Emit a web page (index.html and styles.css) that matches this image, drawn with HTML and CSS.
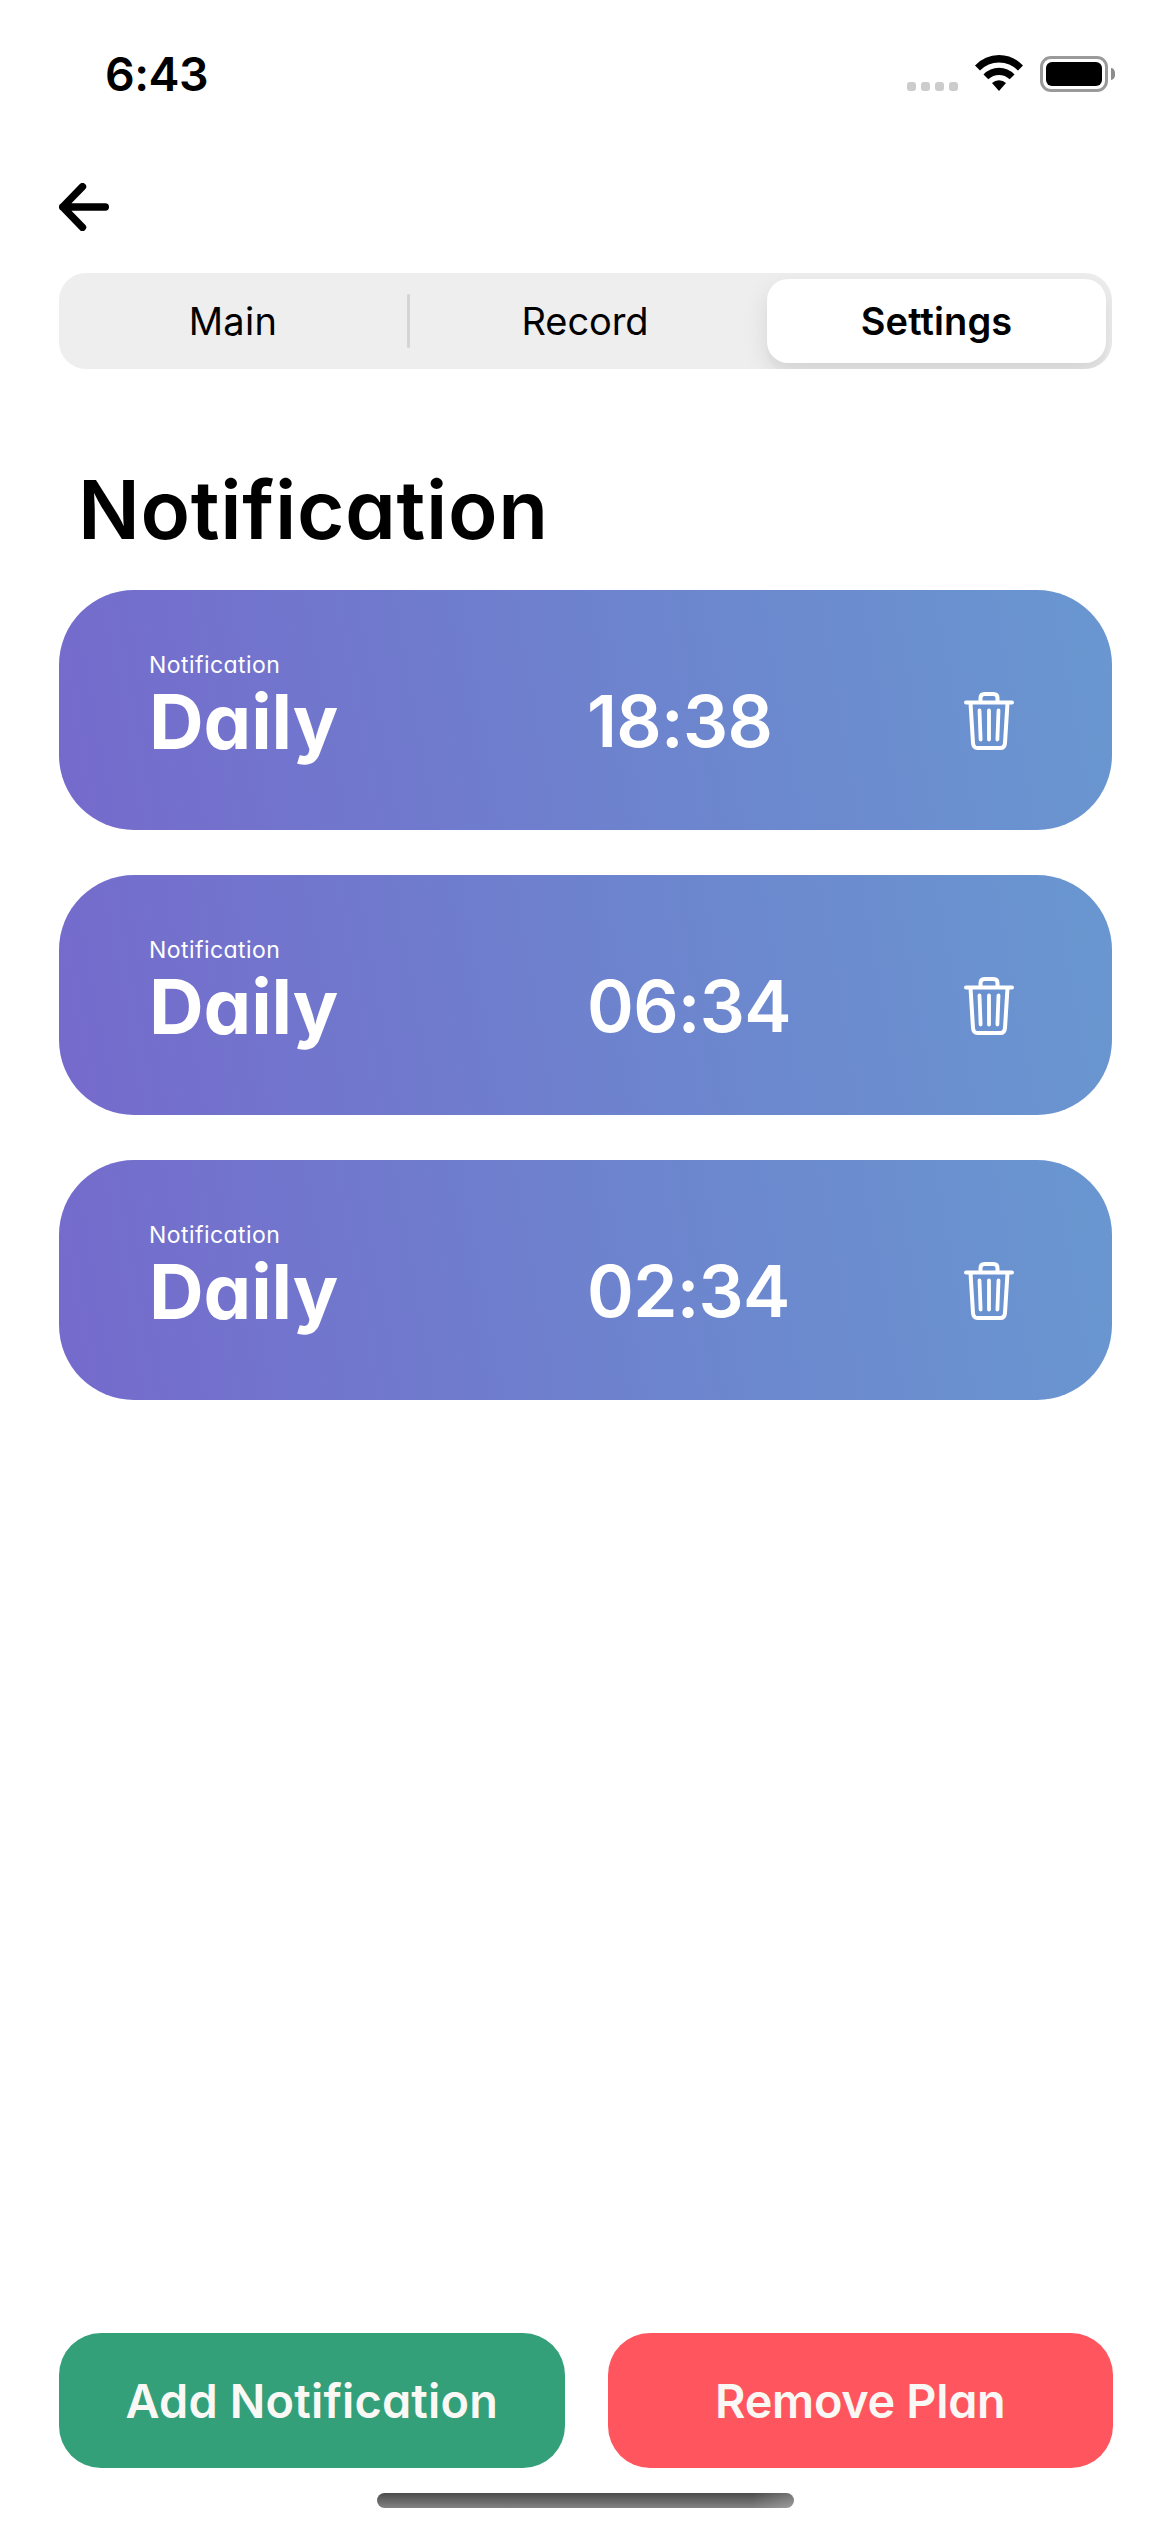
FILE: index.html
```html
<!DOCTYPE html>
<html lang="en">
<head>
<meta charset="utf-8">
<title>Notification settings</title>
<link rel="stylesheet" href="styles.css">
</head>
<body>
<svg class="defs" width="0" height="0" aria-hidden="true">
  <symbol id="trash" viewBox="0 0 50 58">
    <g fill="none" stroke="#fff" stroke-linecap="round" stroke-linejoin="round">
      <path stroke-width="4" d="M2 10.5H48"/>
      <path stroke-width="4" d="M16.5 10V6Q16.5 2 20.500 2H29.500Q33.500 2 33.500 6V10"/>
      <path stroke-width="4" d="M6.500 11L9 51Q9.400 56 13.500 56H36.500Q40.600 56 41 51L43.500 11"/>
      <path stroke-width="3.800" d="M15.500 18.500L16.600 47.500M25 18.500V47.500M34.500 18.500L33.400 47.500"/>
    </g>
  </symbol>
</svg>
<div class="screen">
  <header class="status">
    <span class="clock">6:43</span>
    <div class="indicators">
      <div class="cell"><i></i><i></i><i></i><i></i></div>
      <svg class="wifi" width="50" height="38" viewBox="0 0 50 38">
        <path d="M1 11.500Q11 1 25 1T49 11.500L44 16.500Q36 8.500 25 8.500T6 16.500Z"/>
        <path d="M9.500 20.500Q16 13.800 25 13.800T40.500 20.500L35.700 25.300Q31 21 25 21T14.300 25.300Z"/>
        <path d="M18 29Q21 26.300 25 26.300T32 29L25 37Z"/>
      </svg>
      <div class="battery"><div class="shell"><div class="charge"></div></div><div class="nub"></div></div>
    </div>
  </header>
  <nav class="back">
    <svg width="50" height="48" viewBox="0 0 50 48"><path d="M3.700 24H46.300M23.500 3.700L3.700 24L23.500 44.300" fill="none" stroke="#000" stroke-width="7.400" stroke-linecap="round" stroke-linejoin="round"/></svg>
  </nav>
  <div class="segments">
    <div class="segment main">Main</div>
    <div class="divider"></div>
    <div class="segment record">Record</div>
    <div class="segment selected">Settings</div>
  </div>
  <h1 class="title">Notification</h1>
  <main class="cards">
    <section class="card"><div class="info"><div class="kind">Notification</div><div class="repeat">Daily</div></div><div class="time">18:38</div><svg class="trash"><use href="#trash"/></svg></section>
    <section class="card"><div class="info"><div class="kind">Notification</div><div class="repeat">Daily</div></div><div class="time">06:34</div><svg class="trash"><use href="#trash"/></svg></section>
    <section class="card"><div class="info"><div class="kind">Notification</div><div class="repeat">Daily</div></div><div class="time">02:34</div><svg class="trash"><use href="#trash"/></svg></section>
  </main>
  <footer class="actions">
    <button class="button add">Add Notification</button>
    <button class="button remove">Remove Plan</button>
  </footer>
  <div class="home"></div>
</div>
</body>
</html>
```
FILE: styles.css
```css
* { box-sizing: border-box; }
body { margin: 0; background: #fff; font-family: Inter, "Liberation Sans", sans-serif; color: #000; }
.defs { display: none; }
.screen { display: flex; flex-direction: column; width: 1170px; height: 2532px; padding: 0 57px 24px 59px; }
.status { display: flex; justify-content: space-between; height: 147px; padding: 54px 0 0 46px; margin-right: -2px; }
.clock { font-size: 46.500px; line-height: 41px; font-weight: 600; letter-spacing: -0.500px; }
.indicators { display: flex; }
.cell { display: flex; gap: 5px; padding-top: 28px; margin-right: 16px; }
.cell i { width: 9px; height: 9px; border-radius: 3px; background: #ccc; }
.wifi { margin-right: 16px; }
.battery { display: flex; gap: 3px; padding-top: 2px; }
.shell { width: 68px; height: 36px; padding: 3px; border: 3px solid #9a9a9a; border-radius: 11px; }
.charge { height: 24px; border-radius: 6px; background: #000; }
.nub { width: 4px; height: 12px; margin-top: 12px; border-radius: 0 5px 5px 0 / 0 6px 6px 0; background: #8c8c8c; }
.back { height: 126px; padding-top: 36px; }
.segments { display: flex; width: 1053px; height: 96px; padding: 6px; border-radius: 27px; background: #eee; overflow: hidden; font-size: 38px; line-height: 84px; text-align: center; }
.segment { flex: none; width: 341px; }
.main { padding-right: 5px; letter-spacing: 0.300px; }
.divider { flex: none; width: 3px; height: 54px; margin: 15px 0 0 1px; border-radius: 2px; background: #d4d4d4; }
.record { width: 357px; padding-right: 7px; letter-spacing: -0.100px; }
.selected { width: 339px; border-radius: 21px; background: #fff; font-weight: 600; letter-spacing: 0.100px; box-shadow: 0 9px 24px rgba(0,0,0,.1), 0 9px 3px rgba(0,0,0,.02); }
.title { margin: 92px 0 0 19px; height: 129px; font-size: 81.500px; line-height: 98px; font-weight: 600; letter-spacing: 0.650px; font-feature-settings: "cv11"; }
.cards { display: grid; gap: 45px; font-feature-settings: "cv11"; color: #fff; }
.card { display: flex; width: 1053px; height: 240px; border-radius: 75px; padding-left: 90px; background: linear-gradient(79.800deg, #756acc 0%, #6d84ce 55%, #6997d0 100%); }
.info { width: 438px; padding-top: 60px; }
.kind { font-size: 23px; line-height: 30px; letter-spacing: 0.450px; }
.repeat { font-size: 75.700px; line-height: 84px; font-weight: 700; letter-spacing: -0.100px; }
.time { width: 377px; padding-top: 91px; font-size: 71px; line-height: 80px; font-weight: 600; letter-spacing: -0.700px; }
.trash { width: 50px; height: 58px; margin-top: 102px; }
.actions { display: flex; gap: 43px; height: 135px; margin-top: auto; }
.button { flex: 1; padding: 0; border: 0; border-radius: 42px; font: 600 46.800px Inter, sans-serif; font-feature-settings: "cv11"; color: #faf8f5; }
.add { background: #33a07a; letter-spacing: 0.200px; }
.remove { background: #ff555e; letter-spacing: -0.300px; }
.home { width: 417px; height: 15px; margin: 25px 0 0 318px; border-radius: 8px; background: linear-gradient(90deg, transparent 90%, rgba(255,255,255,.22)), linear-gradient(#4c4c4c, #828282); }
```
